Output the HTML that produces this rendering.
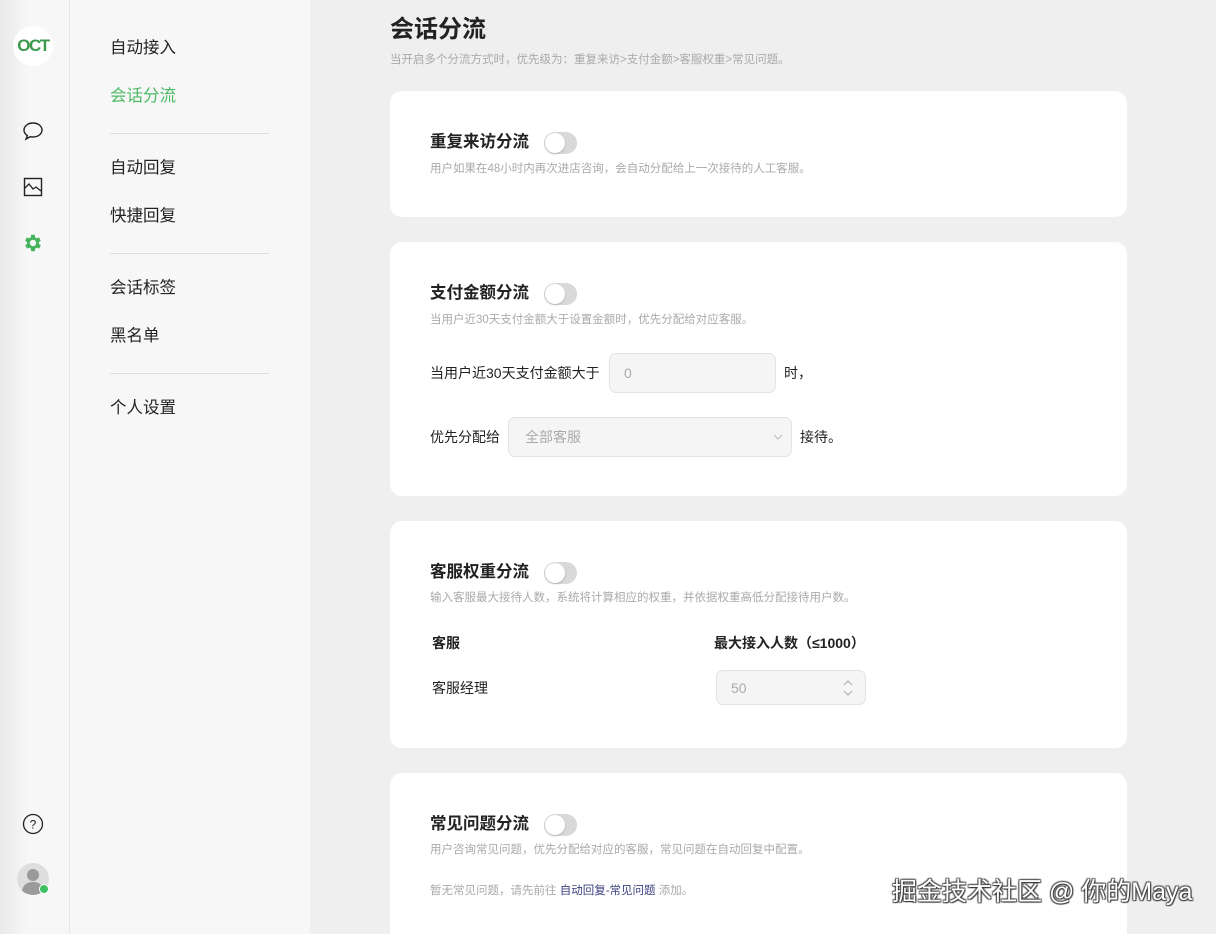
<!DOCTYPE html>
<html><head><meta charset="utf-8"><style>
*{margin:0;padding:0;box-sizing:border-box}
html,body{width:1216px;height:934px;overflow:hidden}
body{background:#efefef;font-family:"Liberation Sans","Noto Sans CJK SC",sans-serif;position:relative;color:#222}
.rail{position:absolute;left:0;top:0;width:70px;height:934px;background:linear-gradient(90deg,#e9e9e9,#f7f7f7 40%,#f7f7f7);border-right:1px solid #e6e6e6}
.side{position:absolute;left:70px;top:0;width:240px;height:934px;background:#f7f7f7}
.si{position:absolute;left:40px;font-size:16.5px;line-height:20px;color:#222}
.hr{position:absolute;left:40px;width:159px;height:1px;background:#dcdcdc}
.abs{position:absolute}
.card{position:absolute;left:390px;width:737px;background:#fff;border-radius:12px}
.t{position:absolute;left:40px;font-size:16.5px;font-weight:bold;line-height:20px;color:#222}
.d{position:absolute;left:40px;font-size:11.5px;color:#aaa;line-height:14px}
.tg{position:absolute;width:33px;height:22px;border-radius:11px;background:#d9d9d9}
.tg:after{content:"";position:absolute;left:1px;top:1px;width:20px;height:20px;border-radius:50%;background:#fff;box-shadow:0 1px 2px rgba(0,0,0,.2)}
.l{position:absolute;font-size:14px;line-height:18px;color:#222}
.inp{position:absolute;background:#f5f5f5;border:1px solid #e3e3e3;border-radius:7px;font-size:14px;color:#aaa;padding-left:14px;display:flex;align-items:center}
</style></head><body>
<div class="rail">
 <div class="abs" style="left:13px;top:26px;width:40px;height:40px;border-radius:50%;background:#fff"></div>
 <div class="abs" style="left:13px;top:36px;width:40px;text-align:center;font-weight:bold;font-size:17px;color:#3d9a4c;letter-spacing:-1.5px">OCT</div>
 <svg class="abs" style="left:22px;top:121px" width="22" height="20" viewBox="0 0 22 20"><path d="M11 2C6 2 2 5 2 9c0 2.3 1.3 4.3 3.4 5.6L4 18l4.2-2.3c.9.2 1.8.3 2.8.3 5 0 9-3 9-7s-4-7-9-7z" fill="none" stroke="#222" stroke-width="1.4"/></svg>
 <svg class="abs" style="left:23px;top:177px" width="20" height="20" viewBox="0 0 20 20"><rect x="1.5" y="1.5" width="17" height="17" fill="none" stroke="#222" stroke-width="1.4"/><path d="M2 11l4-4 4 5 3-2 5 4" fill="none" stroke="#222" stroke-width="1.3"/></svg>
 <svg class="abs" style="left:22px;top:232px" width="22" height="22" viewBox="0 0 24 24"><path fill="#45b45c" d="M19.4 13a7.5 7.5 0 000-2l2.1-1.6-2-3.5-2.5 1a7.6 7.6 0 00-1.7-1L15 3h-4l-.4 2.9a7.6 7.6 0 00-1.7 1l-2.5-1-2 3.5L6.6 11a7.5 7.5 0 000 2l-2.1 1.6 2 3.5 2.5-1c.5.4 1.1.7 1.7 1L11 21h4l.4-2.9c.6-.3 1.2-.6 1.7-1l2.5 1 2-3.5zM13 15.5a3.5 3.5 0 110-7 3.5 3.5 0 010 7z" transform="translate(-1 0)"/></svg>
 <svg class="abs" style="left:22px;top:813px" width="22" height="22" viewBox="0 0 22 22"><circle cx="11" cy="11" r="9.5" fill="none" stroke="#222" stroke-width="1.3"/><text x="11" y="15.5" text-anchor="middle" font-size="12" font-family="Liberation Sans" fill="#222">?</text></svg>
 <div class="abs" style="left:17px;top:863px;width:32px;height:32px;border-radius:50%;background:#dedede;overflow:hidden"><div class="abs" style="left:10px;top:6px;width:12px;height:12px;border-radius:50%;background:#9a9a9a"></div><div class="abs" style="left:5px;top:19px;width:22px;height:14px;border-radius:10px 10px 0 0;background:#9a9a9a"></div></div>
 <div class="abs" style="left:39px;top:884px;width:10px;height:10px;border-radius:50%;background:#3fc062;border:1px solid #fff"></div>
</div>
<div class="side">
 <div class="si" style="top:38px">自动接入</div>
 <div class="si" style="top:86px;color:#4cba64">会话分流</div>
 <div class="hr" style="top:133px"></div>
 <div class="si" style="top:158px">自动回复</div>
 <div class="si" style="top:206px">快捷回复</div>
 <div class="hr" style="top:253px"></div>
 <div class="si" style="top:278px">会话标签</div>
 <div class="si" style="top:326px">黑名单</div>
 <div class="hr" style="top:373px"></div>
 <div class="si" style="top:398px">个人设置</div>
</div>
<div class="abs" style="left:390px;top:14px;font-size:24px;font-weight:bold;line-height:32px">会话分流</div>
<div class="abs" style="left:390px;top:51px;font-size:11.5px;color:#aaa">当开启多个分流方式时，优先级为：重复来访&gt;支付金额&gt;客服权重&gt;常见问题。</div>

<div class="card" style="top:91px;height:126px">
 <div class="t" style="top:41px">重复来访分流</div><div class="tg" style="left:154px;top:41px"></div>
 <div class="d" style="top:71px">用户如果在48小时内再次进店咨询，会自动分配给上一次接待的人工客服。</div>
</div>
<div class="card" style="top:242px;height:254px">
 <div class="t" style="top:41px">支付金额分流</div><div class="tg" style="left:154px;top:41px"></div>
 <div class="d" style="top:71px">当用户近30天支付金额大于设置金额时，优先分配给对应客服。</div>
 <div class="l" style="left:40px;top:122px">当用户近30天支付金额大于</div>
 <div class="inp" style="left:219px;top:111px;width:167px;height:40px">0</div>
 <div class="l" style="left:394px;top:122px">时，</div>
 <div class="l" style="left:40px;top:186px">优先分配给</div>
 <div class="inp" style="left:118px;top:175px;width:284px;height:40px;padding-left:16px">全部客服<svg class="abs" style="left:264px;top:16px" width="10" height="7" viewBox="0 0 10 7"><path d="M1 1l4 4 4-4" fill="none" stroke="#bbb" stroke-width="1"/></svg></div>
 <div class="l" style="left:410px;top:186px">接待。</div>
</div>
<div class="card" style="top:521px;height:227px">
 <div class="t" style="top:41px">客服权重分流</div><div class="tg" style="left:154px;top:41px"></div>
 <div class="d" style="top:70px">输入客服最大接待人数，系统将计算相应的权重，并依据权重高低分配接待用户数。</div>
 <div class="l" style="left:42px;top:113px;font-weight:bold">客服</div>
 <div class="l" style="left:324px;top:113px;font-weight:bold">最大接入人数（≤1000）</div>
 <div class="l" style="left:42px;top:158px">客服经理</div>
 <div class="inp" style="left:326px;top:149px;width:150px;height:35px">50<svg class="abs" style="left:126px;top:8px" width="10" height="18" viewBox="0 0 10 18"><path d="M1 6l4-4 4 4M1 12l4 4 4-4" fill="none" stroke="#aaa" stroke-width="1"/></svg></div>
</div>
<div class="card" style="top:773px;height:200px">
 <div class="t" style="top:41px">常见问题分流</div><div class="tg" style="left:154px;top:41px"></div>
 <div class="d" style="top:70px">用户咨询常见问题，优先分配给对应的客服，常见问题在自动回复中配置。</div>
 <div class="d" style="top:111px">暂无常见问题，请先前往 <span style="color:#3b3f7d">自动回复-常见问题</span> 添加。</div>
</div>
<div class="abs" style="left:892px;top:876px;font-size:25px;color:#fff;line-height:32px;text-shadow:1px 1px 1px #333,-1px -1px 1px #555,1px -1px 1px #555,-1px 1px 1px #555">掘金技术社区 @ 你的Maya</div>
</body></html>
